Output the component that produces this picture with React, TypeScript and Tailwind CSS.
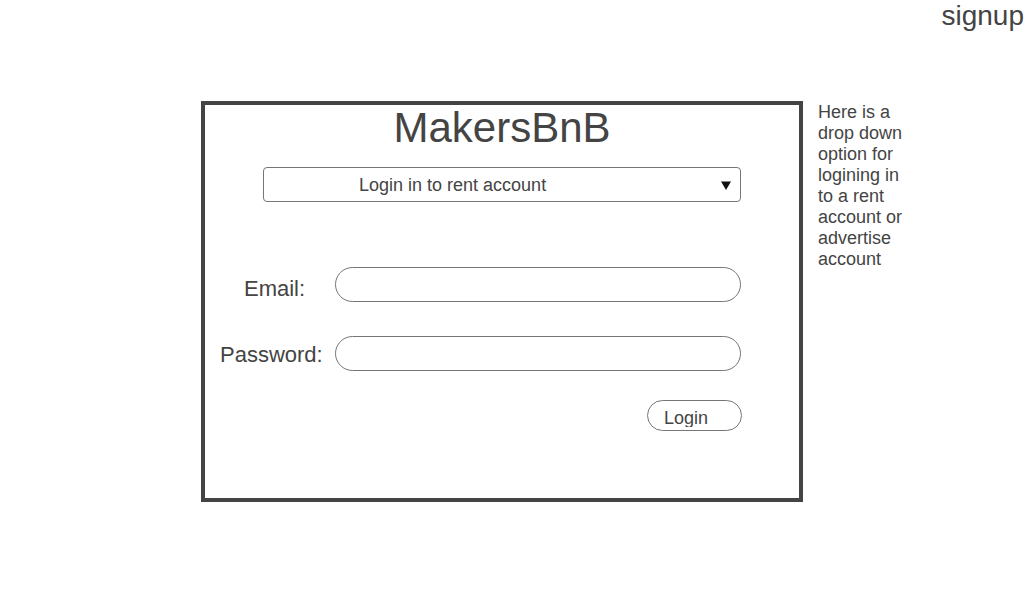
export default function App() {
  return (
    <div className="h-[600px] w-[1024px] bg-white font-['Liberation_Sans',Arial,sans-serif] text-[#444]">
      {/* header */}
      <div className="flex justify-end">
        <a href="#" className="text-[28px] leading-[32px]">
          signup
        </a>
      </div>

      <div className="mt-[69px] flex items-start">
        <form className="ml-[201px] h-[401px] w-[602px] border-4 border-[#444]">
          <h1 className="text-center text-[42px] leading-[45px]">MakersBnB</h1>

          <div className="mx-[58px] mt-[17px] flex h-[35px] items-center rounded-[4px] border border-[#767676] pl-[95px] pr-[9px] pt-[2px]">
            <span className="text-[18px] leading-[21px]">Login in to rent account</span>
            <svg className="ml-auto" width="10" height="9" viewBox="0 0 10 9">
              <polygon points="0,0.5 10,0.5 5,9" fill="#111" />
            </svg>
          </div>

          <div className="mt-[65px] flex items-start">
            <label className="mt-[9px] w-[130px] pl-[39px] text-[22px] leading-[25px]">Email:</label>
            <input
              type="text"
              className="h-[35px] w-[406px] rounded-full border border-[#767676] px-3 outline-none"
            />
          </div>

          <div className="mt-[34px] flex items-start">
            <label className="mt-[6px] w-[130px] pl-[15px] text-[22px] leading-[25px]">Password:</label>
            <input
              type="password"
              className="h-[35px] w-[406px] rounded-full border border-[#767676] px-3 outline-none"
            />
          </div>

          <div className="mr-[57px] mt-[29px] flex justify-end">
            <button
              type="button"
              className="h-[31px] w-[95px] rounded-full border border-[#767676] pl-[16px] pt-[4px] text-left"
            >
              <span className="block h-[19px] overflow-hidden text-[18px] leading-[21px]">Login</span>
            </button>
          </div>
        </form>

        <p className="ml-[15px] mt-[1px] w-[100px] text-[18px] leading-[21px]">
          Here is a drop down option for logining in to a rent account or advertise account
        </p>
      </div>
    </div>
  );
}
